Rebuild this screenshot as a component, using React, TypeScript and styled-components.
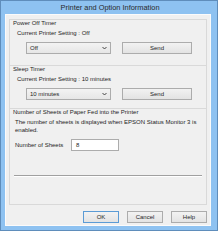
import React from "react";
import styled, { createGlobalStyle } from "styled-components";

const GlobalStyle = createGlobalStyle`
  html, body {
    margin: 0;
    padding: 0;
    background: #ffffff;
  }
  * {
    box-sizing: border-box;
  }
`;

const Window = styled.div`
  width: 218px;
  height: 231px;
  display: flex;
  flex-direction: column;
  background: #8ec2f1;
  border: 1px solid #5f8dbb;
  font-family: "Liberation Sans", Arial, sans-serif;
  color: #1e1e1e;
`;

const TitleBar = styled.div`
  height: 14px;
  display: flex;
  align-items: center;
  justify-content: center;
  font-size: 7.4px;
  color: #2a2a2a;
  padding-left: 2px;
`;

const Body = styled.div`
  flex: 1;
  margin: 0 6px 4px 4px;
  background: #f0f0f0;
  border: 1px solid #fbfbfb;
  display: flex;
  flex-direction: column;
  padding: 4px 3px 2px 3px;
`;

const Panel = styled.div`
  border: 1px solid #d9d9d9;
  display: flex;
  flex-direction: column;
  height: 186px;
`;

const Section = styled.div<{ $h: number; $last?: boolean }>`
  height: ${(p) => p.$h}px;
  display: flex;
  flex-direction: column;
  padding-left: 3px;
  border-bottom: ${(p) => (p.$last ? "none" : "1px solid #d9d9d9")};
  flex: ${(p) => (p.$last ? 1 : "none")};
`;

const Legend = styled.div`
  font-size: 6px;
  line-height: 7px;
  height: 7px;
  white-space: nowrap;
`;

const Label = styled.div<{ $indent: number; $mt?: number }>`
  font-size: 6px;
  line-height: 7px;
  margin-left: ${(p) => p.$indent}px;
  margin-top: ${(p) => p.$mt ?? 2}px;
  white-space: nowrap;
`;

const Para = styled.div`
  font-size: 6px;
  line-height: 8px;
  margin: 2px 6px 0 2px;
`;

const ControlRow = styled.div`
  display: flex;
  align-items: center;
  margin-top: 5px;
  margin-left: 13px;
  gap: 11px;
`;

const Combo = styled.div`
  width: 85px;
  height: 12px;
  border: 1px solid #acacac;
  background: linear-gradient(#f3f3f3, #e6e6e6);
  display: flex;
  align-items: center;
  justify-content: space-between;
  padding: 0 3px 0 3px;
  font-size: 6px;
`;

const Chevron = styled.svg`
  width: 5px;
  height: 4px;
`;

const Button = styled.div<{ $w: number; $default?: boolean }>`
  width: ${(p) => p.$w}px;
  height: 12px;
  border: 1px solid ${(p) => (p.$default ? "#5b9bd5" : "#acacac")};
  background: linear-gradient(#f2f2f2, #e3e3e3);
  display: flex;
  align-items: center;
  justify-content: center;
  font-size: 6px;
`;

const SheetsRow = styled.div`
  display: flex;
  align-items: center;
  margin: 5px 0 0 2px;
`;

const SheetsLabel = styled.div`
  width: 56px;
  font-size: 6px;
`;

const Field = styled.div`
  width: 48px;
  height: 12px;
  background: #ffffff;
  border: 1px solid #acacac;
  font-size: 6px;
  display: flex;
  align-items: center;
  padding-left: 4px;
`;

const Separator = styled.div`
  height: 2px;
  margin: 24px 4px 0 1px;
  border-top: 1px solid #a0a0a0;
  border-bottom: 1px solid #ffffff;
`;

const Footer = styled.div`
  display: flex;
  justify-content: flex-end;
  gap: 8px;
  margin-top: 6px;
  padding-right: 0px;
`;

const Arrow = () => (
  <Chevron viewBox="0 0 5 4">
    <path d="M0.5 1 L2.5 3 L4.5 1" fill="none" stroke="#333" strokeWidth="0.9" />
  </Chevron>
);

export default function App() {
  return (
    <>
      <GlobalStyle />
      <Window>
        <TitleBar>Printer and Option Information</TitleBar>
        <Body>
          <Panel>
            <Section $h={46}>
              <Legend>Power Off Timer</Legend>
              <Label $indent={4} $mt={3}>Current Printer Setting : Off</Label>
              <ControlRow>
                <Combo>
                  Off
                  <Arrow />
                </Combo>
                <Button $w={70}>Send</Button>
              </ControlRow>
            </Section>
            <Section $h={43}>
              <Legend>Sleep Timer</Legend>
              <Label $indent={4} $mt={3}>Current Printer Setting : 10 minutes</Label>
              <ControlRow>
                <Combo>
                  10 minutes
                  <Arrow />
                </Combo>
                <Button $w={70}>Send</Button>
              </ControlRow>
            </Section>
            <Section $h={95} $last>
              <Legend>Number of Sheets of Paper Fed into the Printer</Legend>
              <Para>
                The number of sheets is displayed when EPSON Status Monitor 3 is enabled.
              </Para>
              <SheetsRow>
                <SheetsLabel>Number of Sheets</SheetsLabel>
                <Field>8</Field>
              </SheetsRow>
              <Separator />
            </Section>
          </Panel>
          <Footer>
            <Button $w={36} $default>
              OK
            </Button>
            <Button $w={36}>Cancel</Button>
            <Button $w={36}>Help</Button>
          </Footer>
        </Body>
      </Window>
    </>
  );
}
